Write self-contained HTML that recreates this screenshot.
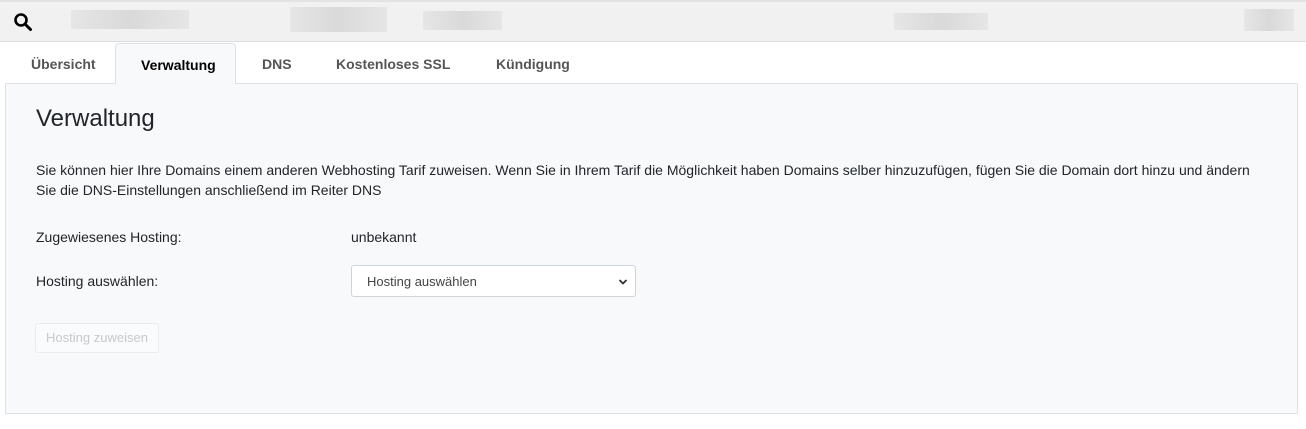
<!DOCTYPE html>
<html><head><style>
*{box-sizing:border-box;margin:0;padding:0}
body{width:1306px;height:429px;background:#fff;font-family:"Liberation Sans",Arial,sans-serif;position:relative;overflow:hidden;color:#212529}
.top{position:absolute;left:0;top:0;width:1306px;height:42px;background:#f1f1f1;border-top:2px solid #e3e3e3;border-bottom:1px solid #dedede}
.b{position:absolute;background:linear-gradient(90deg,#e6e6e6,#d9d9d9,#e6e6e6)}
.tab{position:absolute;top:56px;font-size:14px;font-weight:bold;color:#555}
.active{position:absolute;left:115px;top:43px;width:121px;height:41px;background:#f8f9fa;border:1px solid #dee2e6;border-bottom:none;border-radius:4px 4px 0 0;z-index:2}
.panel{position:absolute;left:5px;top:83px;width:1293px;height:331px;background:#f8f9fa;border:1px solid #dee2e6}
.t{position:absolute;font-size:14px}
</style></head><body>
<div class="top">
<svg style="position:absolute;left:13px;top:10px" width="20" height="20" viewBox="0 0 20 20"><circle cx="8" cy="8" r="5.5" fill="none" stroke="#000" stroke-width="2.6"/><path d="M12 12 L17.5 17.5" stroke="#000" stroke-width="3" stroke-linecap="round"/></svg>
<div class="b" style="left:71px;top:8px;width:118px;height:19px"></div>
<div class="b" style="left:290px;top:5px;width:97px;height:25px"></div>
<div class="b" style="left:423px;top:9px;width:79px;height:19px"></div>
<div class="b" style="left:894px;top:11px;width:94px;height:17px"></div>
<div class="b" style="left:1244px;top:7px;width:50px;height:22px"></div>
</div>
<div class="panel"></div>
<div class="active"><span style="position:absolute;left:25px;top:13px;font-size:14px;font-weight:bold;color:#000">Verwaltung</span></div>
<div class="tab" style="left:31px">Übersicht</div>
<div class="tab" style="left:262px">DNS</div>
<div class="tab" style="left:336px">Kostenloses SSL</div>
<div class="tab" style="left:496px">Kündigung</div>
<div class="t" style="left:36px;top:105px;font-size:24px">Verwaltung</div>
<div class="t" style="left:36px;top:160px;line-height:20px;width:1220px">Sie können hier Ihre Domains einem anderen Webhosting Tarif zuweisen. Wenn Sie in Ihrem Tarif die Möglichkeit haben Domains selber hinzuzufügen, fügen Sie die Domain dort hinzu und ändern Sie die DNS-Einstellungen anschließend im Reiter DNS</div>
<div class="t" style="left:36px;top:229px">Zugewiesenes Hosting:</div>
<div class="t" style="left:351px;top:229px">unbekannt</div>
<div class="t" style="left:36px;top:273px">Hosting auswählen:</div>
<div style="position:absolute;left:351px;top:265px;width:285px;height:32px;background:#fff;border:1px solid #ced4da;border-radius:3px">
<span style="position:absolute;left:15px;top:8px;font-size:13px;color:#444">Hosting auswählen</span>
<svg style="position:absolute;right:7px;top:12px" width="10" height="8" viewBox="0 0 10 8"><path d="M1.5 2 L5 5.5 L8.5 2" fill="none" stroke="#333" stroke-width="1.8"/></svg>
</div>
<div style="position:absolute;left:35px;top:323px;width:124px;height:30px;border:1px solid #e9ecef;border-radius:3px;background:#fafbfc;font-size:13px;color:#c8c8c8;text-align:center;line-height:28px">Hosting zuweisen</div>
</body></html>
